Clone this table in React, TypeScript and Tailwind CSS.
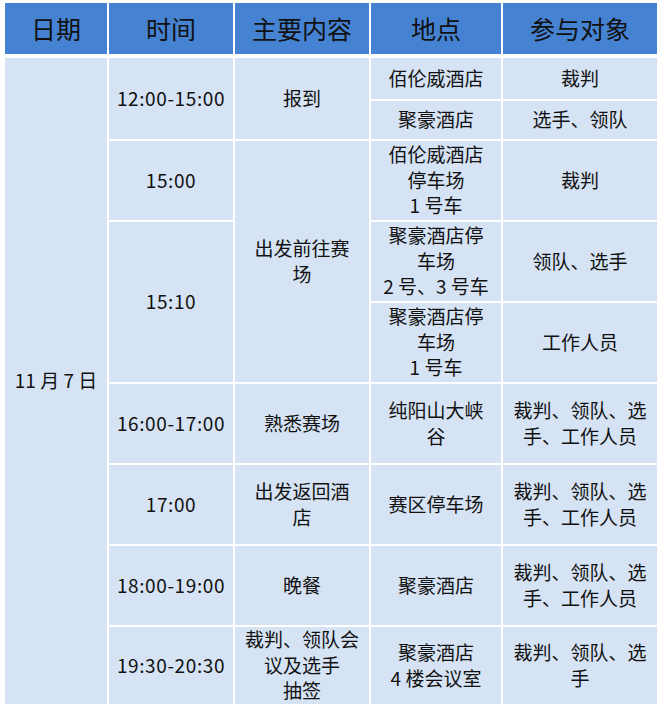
type Cell = { text: string[]; pos: string };

const cells: Cell[] = [
  { text: ["11 月 7 日"], pos: "col-start-1 row-start-1 row-span-9" },

  { text: ["12:00-15:00"], pos: "col-start-2 row-start-1 row-span-2 tracking-[0.6px]" },
  { text: ["15:00"], pos: "col-start-2 row-start-3 tracking-[0.6px]" },
  { text: ["15:10"], pos: "col-start-2 row-start-4 row-span-2 tracking-[0.6px]" },
  { text: ["16:00-17:00"], pos: "col-start-2 row-start-6 tracking-[0.6px]" },
  { text: ["17:00"], pos: "col-start-2 row-start-7 tracking-[0.6px]" },
  { text: ["18:00-19:00"], pos: "col-start-2 row-start-8 tracking-[0.6px]" },
  { text: ["19:30-20:30"], pos: "col-start-2 row-start-9 tracking-[0.6px]" },

  { text: ["报到"], pos: "col-start-3 row-start-1 row-span-2" },
  { text: ["出发前往赛", "场"], pos: "col-start-3 row-start-3 row-span-3" },
  { text: ["熟悉赛场"], pos: "col-start-3 row-start-6" },
  { text: ["出发返回酒", "店"], pos: "col-start-3 row-start-7" },
  { text: ["晚餐"], pos: "col-start-3 row-start-8" },
  { text: ["裁判、领队会", "议及选手", "抽签"], pos: "col-start-3 row-start-9" },

  { text: ["佰伦威酒店"], pos: "col-start-4 row-start-1" },
  { text: ["聚豪酒店"], pos: "col-start-4 row-start-2" },
  { text: ["佰伦威酒店", "停车场", "1 号车"], pos: "col-start-4 row-start-3" },
  { text: ["聚豪酒店停", "车场", "2 号、3 号车"], pos: "col-start-4 row-start-4" },
  { text: ["聚豪酒店停", "车场", "1 号车"], pos: "col-start-4 row-start-5" },
  { text: ["纯阳山大峡", "谷"], pos: "col-start-4 row-start-6" },
  { text: ["赛区停车场"], pos: "col-start-4 row-start-7" },
  { text: ["聚豪酒店"], pos: "col-start-4 row-start-8" },
  { text: ["聚豪酒店", "4 楼会议室"], pos: "col-start-4 row-start-9" },

  { text: ["裁判"], pos: "col-start-5 row-start-1" },
  { text: ["选手、领队"], pos: "col-start-5 row-start-2" },
  { text: ["裁判"], pos: "col-start-5 row-start-3" },
  { text: ["领队、选手"], pos: "col-start-5 row-start-4" },
  { text: ["工作人员"], pos: "col-start-5 row-start-5" },
  { text: ["裁判、领队、选", "手、工作人员"], pos: "col-start-5 row-start-6" },
  { text: ["裁判、领队、选", "手、工作人员"], pos: "col-start-5 row-start-7" },
  { text: ["裁判、领队、选", "手、工作人员"], pos: "col-start-5 row-start-8" },
  { text: ["裁判、领队、选", "手"], pos: "col-start-5 row-start-9" },
];

const headers = ["日期", "时间", "主要内容", "地点", "参与对象"];

export default function App() {
  return (
    <div
      className="min-h-[711px] bg-white pl-[5px] pt-[3px] text-[#111]"
      style={{ fontFamily: '"Noto Sans CJK SC", "Noto Sans", sans-serif' }}
    >
      <div className="grid w-[652px] grid-cols-[102px_124px_134px_130px_154px] gap-[2px]">
        {headers.map((h) => (
          <div key={h} className="flex h-[51px] items-center justify-center bg-[#4682d2] text-[25px]">
            {h}
          </div>
        ))}
      </div>
      <div className="mt-[4px] grid w-[652px] grid-cols-[102px_124px_134px_130px_154px] grid-rows-[41px_38px_79px_79px_79px_79px_79px_79px_77px] gap-[2px]">
        {cells.map((c, i) => (
          <div
            key={i}
            className={`${c.pos} flex flex-col items-center justify-center bg-[#d5e3f4] pb-[2px] text-center text-[19px] leading-[25.5px]`}
          >
            {c.text.map((t, j) => (
              <span key={j} className="whitespace-nowrap">
                {t}
              </span>
            ))}
          </div>
        ))}
      </div>
    </div>
  );
}
